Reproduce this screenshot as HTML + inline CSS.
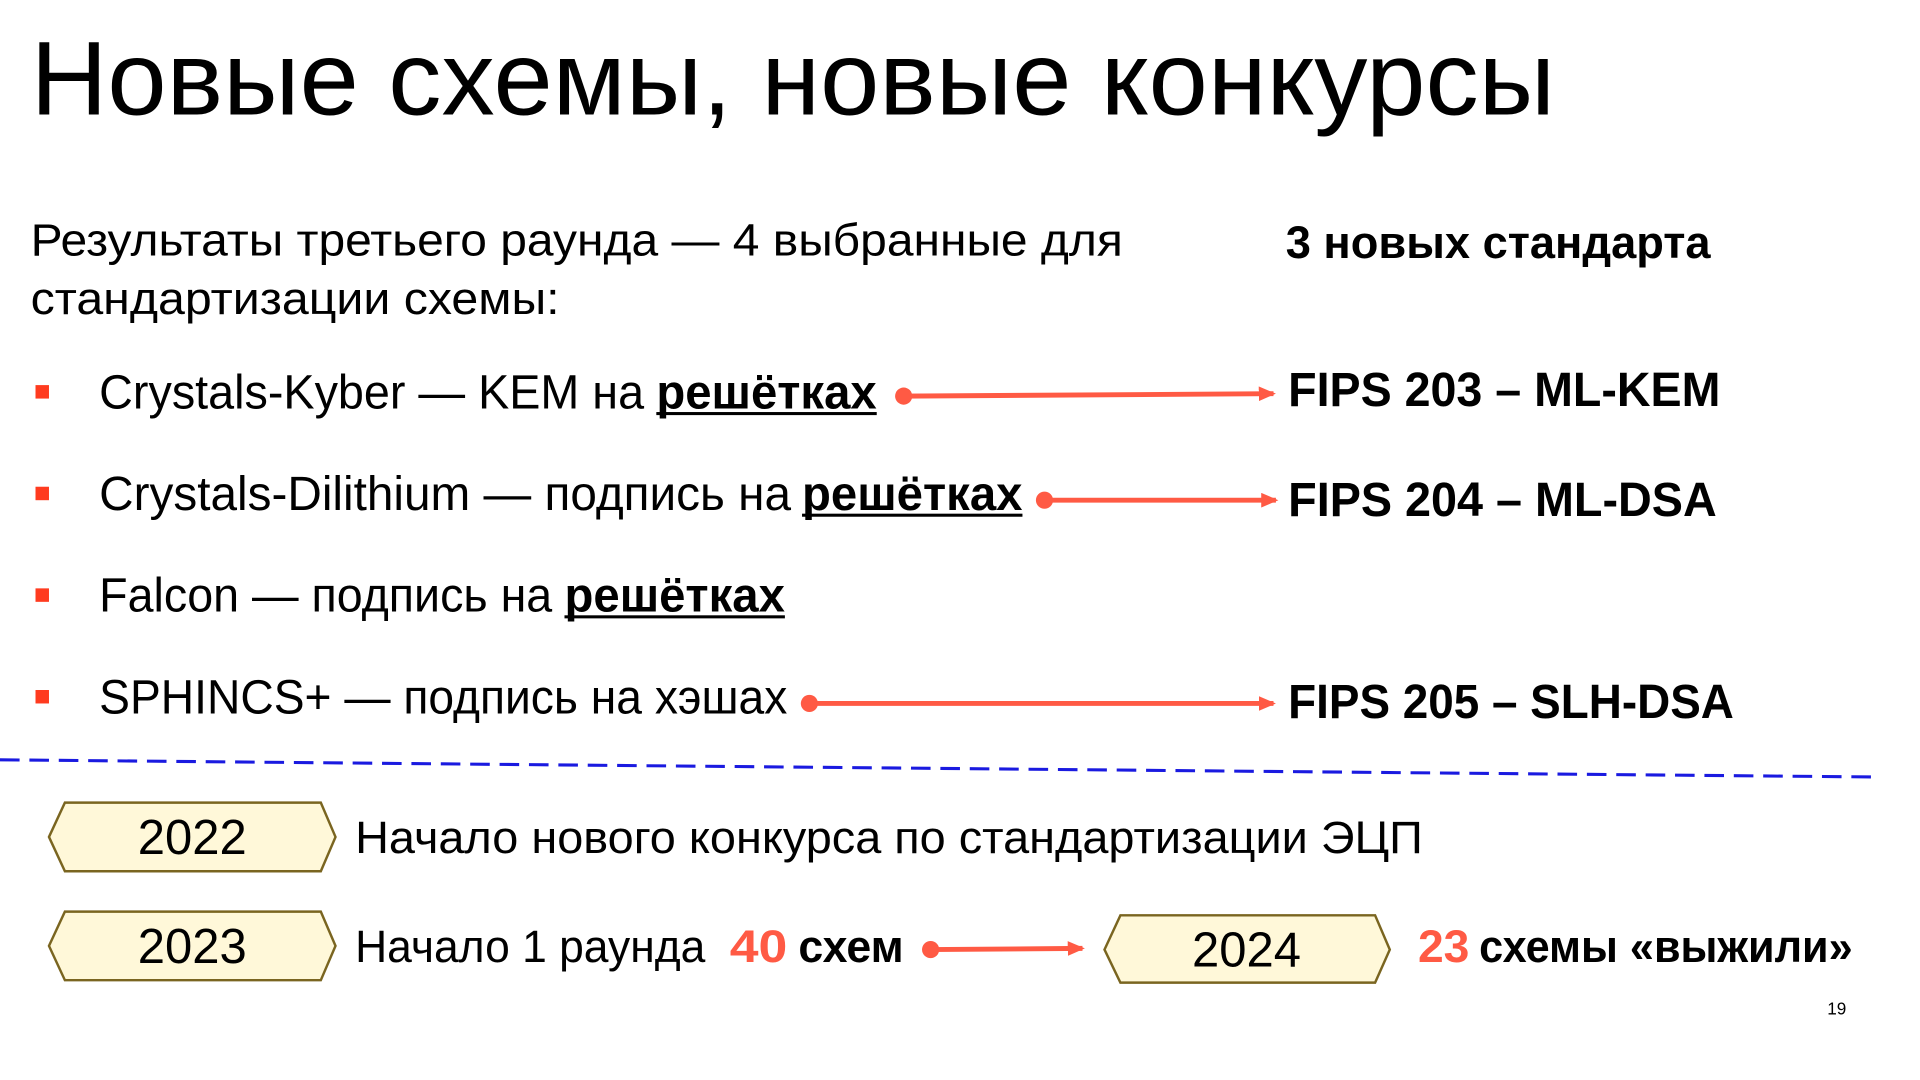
<!DOCTYPE html>
<html><head><meta charset="utf-8">
<style>
html,body{margin:0;padding:0;background:#fff;overflow:hidden}
svg{display:block}
text{font-family:"Liberation Sans","DejaVu Sans",sans-serif;fill:#000}
.b{font-weight:bold}
.r{fill:#ff5a44}
</style></head>
<body>
<svg width="1920" height="1080" viewBox="0 0 1568 881" xmlns="http://www.w3.org/2000/svg">
<defs>
<marker id="ah" markerWidth="14" markerHeight="12" refX="12" refY="6" orient="auto" markerUnits="userSpaceOnUse">
<path d="M0,0 L14,6 L0,12 Z" fill="#ff5a44"/>
</marker>
</defs>
<rect width="1568" height="881" fill="#fff"/>
<text x="25" y="93" font-size="86" textLength="1245" lengthAdjust="spacingAndGlyphs">Новые схемы, новые конкурсы</text>

<text x="25" y="208" font-size="37" textLength="892" lengthAdjust="spacingAndGlyphs">Результаты третьего раунда — 4 выбранные для</text>
<text x="25" y="256" font-size="37" textLength="432" lengthAdjust="spacingAndGlyphs">стандартизации схемы:</text>
<text x="1050" y="210" font-size="37" class="b" textLength="347" lengthAdjust="spacingAndGlyphs">3 новых стандарта</text>

<g fill="#ff3b1f">
<rect x="29" y="314" width="11" height="11"/>
<rect x="29" y="397" width="11" height="11"/>
<rect x="29" y="480" width="11" height="11"/>
<rect x="29" y="563" width="11" height="11"/>
</g>

<text x="81" y="333" font-size="39" textLength="445" lengthAdjust="spacingAndGlyphs">Crystals-Kyber — KEM на</text>
<text x="536" y="333" font-size="39" class="b" textLength="180" lengthAdjust="spacingAndGlyphs">решётках</text>
<rect x="536" y="336" width="180" height="2.5" fill="#000"/>

<text x="81" y="416" font-size="39" textLength="565" lengthAdjust="spacingAndGlyphs">Crystals-Dilithium — подпись на</text>
<text x="655" y="416" font-size="39" class="b" textLength="180" lengthAdjust="spacingAndGlyphs">решётках</text>
<rect x="655" y="419" width="180" height="2.5" fill="#000"/>

<text x="81" y="499" font-size="39" textLength="370" lengthAdjust="spacingAndGlyphs">Falcon — подпись на</text>
<text x="461" y="499" font-size="39" class="b" textLength="180" lengthAdjust="spacingAndGlyphs">решётках</text>
<rect x="461" y="502" width="180" height="2.5" fill="#000"/>

<text x="81" y="582" font-size="39" textLength="562" lengthAdjust="spacingAndGlyphs">SPHINCS+ — подпись на хэшах</text>

<g stroke="#ff5a44" stroke-width="4" fill="none">
<line x1="738" y1="323" x2="1040" y2="321" marker-end="url(#ah)"/>
<line x1="853" y1="408" x2="1042" y2="408" marker-end="url(#ah)"/>
<line x1="661" y1="574" x2="1040" y2="574" marker-end="url(#ah)"/>
<line x1="760" y1="775" x2="884" y2="774" marker-end="url(#ah)"/>
</g>
<g fill="#ff5a44">
<circle cx="738" cy="323" r="7"/>
<circle cx="853" cy="408" r="7"/>
<circle cx="661" cy="574" r="7"/>
<circle cx="760" cy="775" r="7"/>
</g>

<text x="1052" y="331" font-size="39" class="b" textLength="353" lengthAdjust="spacingAndGlyphs">FIPS 203 – ML-KEM</text>
<text x="1052" y="421" font-size="39" class="b" textLength="350" lengthAdjust="spacingAndGlyphs">FIPS 204 – ML-DSA</text>
<text x="1052" y="586" font-size="39" class="b" textLength="364" lengthAdjust="spacingAndGlyphs">FIPS 205 – SLH-DSA</text>

<line x1="0" y1="620" x2="1528" y2="634" stroke="#1a1ae0" stroke-width="2.5" stroke-dasharray="16 8"/>

<g fill="#fff8d9" stroke="#7a6520" stroke-width="2">
<polygon points="40,683 53,655 262,655 274,683 262,711 53,711"/>
<polygon points="40,772 53,744 262,744 274,772 262,800 53,800"/>
<polygon points="902,775 915,747 1123,747 1135,775 1123,802 915,802"/>
</g>
<text x="157" y="697" font-size="40" text-anchor="middle">2022</text>
<text x="157" y="786" font-size="40" text-anchor="middle">2023</text>
<text x="1018" y="789" font-size="40" text-anchor="middle">2024</text>

<text x="290" y="696" font-size="37" textLength="872" lengthAdjust="spacingAndGlyphs">Начало нового конкурса по стандартизации ЭЦП</text>
<text x="290" y="785" font-size="37" textLength="286" lengthAdjust="spacingAndGlyphs">Начало 1 раунда</text>
<text x="596" y="785" font-size="37" class="b r" textLength="47" lengthAdjust="spacingAndGlyphs">40</text>
<text x="652" y="785" font-size="37" class="b" textLength="86" lengthAdjust="spacingAndGlyphs">схем</text>
<text x="1158" y="785" font-size="37" class="b r" textLength="42" lengthAdjust="spacingAndGlyphs">23</text>
<text x="1208" y="785" font-size="37" class="b" textLength="305" lengthAdjust="spacingAndGlyphs">схемы «выжили»</text>

<text x="1500" y="828" font-size="14" text-anchor="middle">19</text>
</svg>
</body></html>
